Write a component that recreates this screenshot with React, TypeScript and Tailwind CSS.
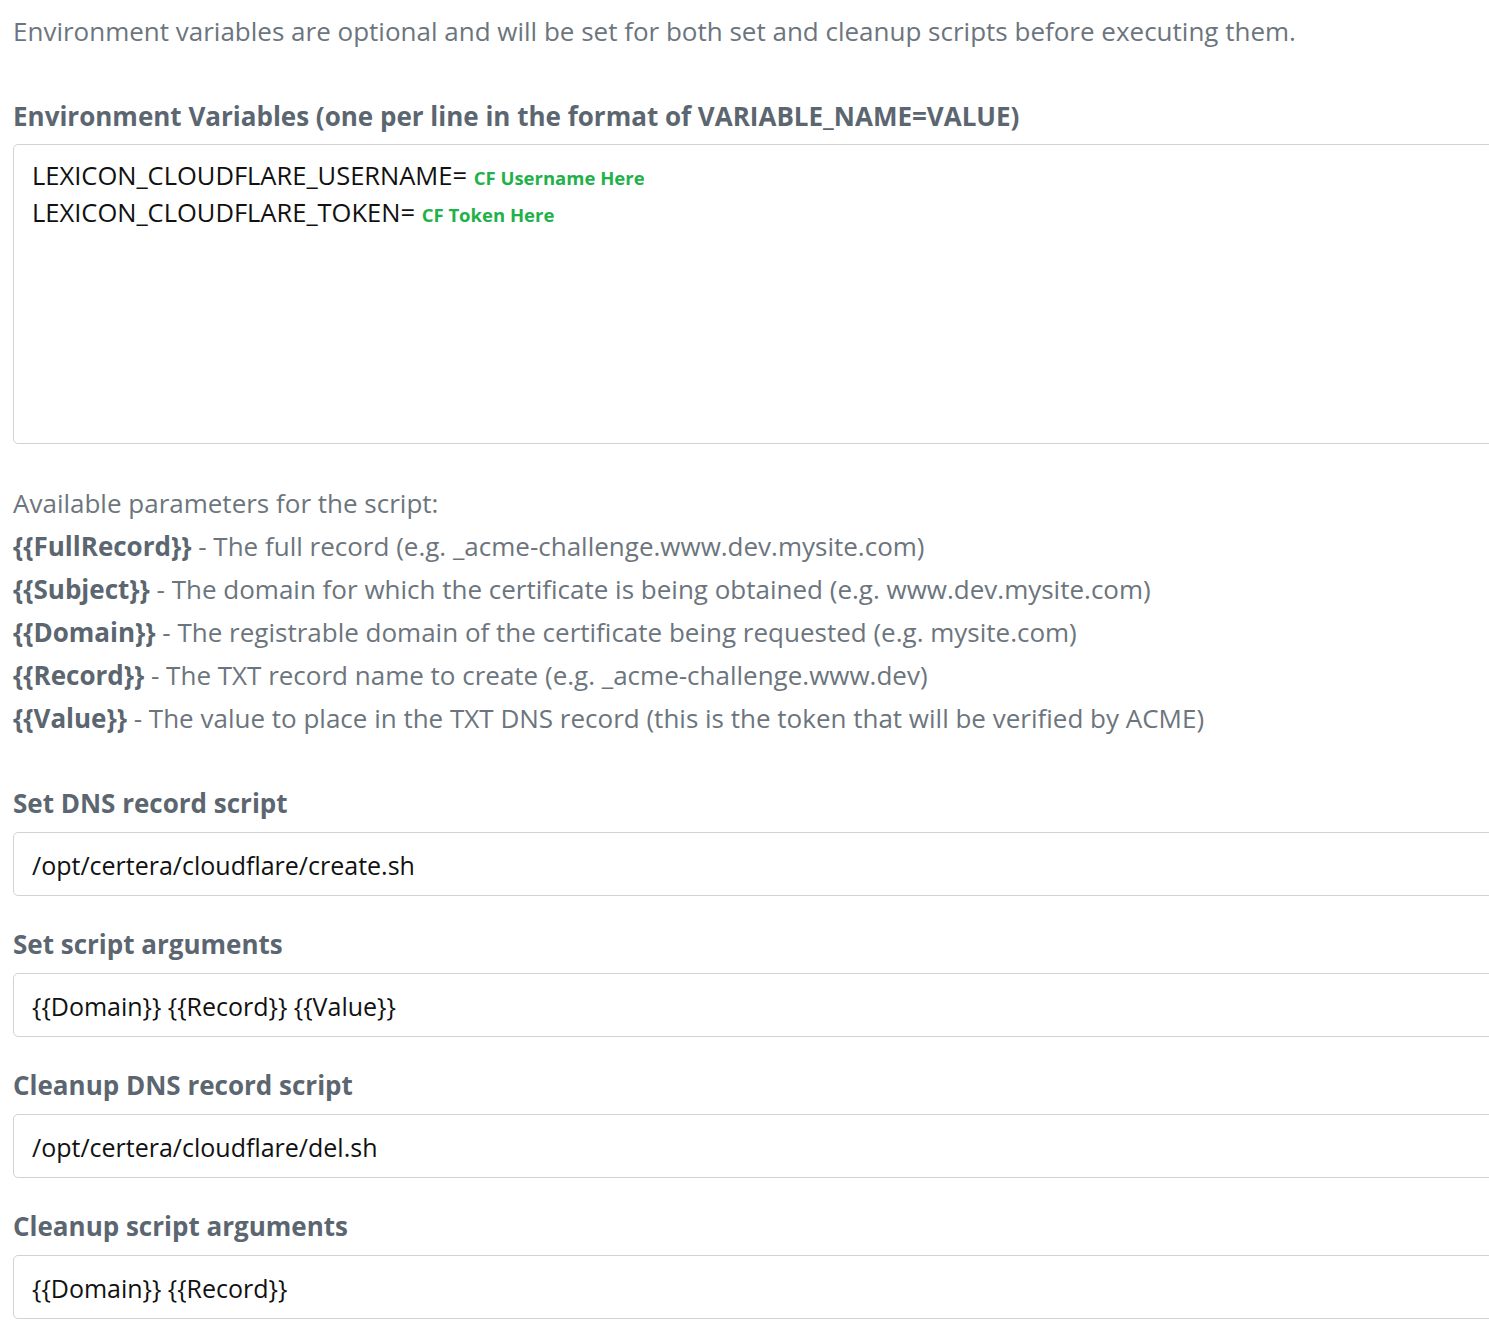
import React from 'react';

const params = [
    { name: 'FullRecord', desc: 'The full record (e.g. _acme-challenge.www.dev.mysite.com)' },
    { name: 'Subject', desc: 'The domain for which the certificate is being obtained (e.g. www.dev.mysite.com)' },
    { name: 'Domain', desc: 'The registrable domain of the certificate being requested (e.g. mysite.com)' },
    { name: 'Record', desc: 'The TXT record name to create (e.g. _acme-challenge.www.dev)' },
    { name: 'Value', desc: 'The value to place in the TXT DNS record (this is the token that will be verified by ACME)' },
];

const fields = [
    { label: 'Set DNS record script', value: '/opt/certera/cloudflare/create.sh' },
    { label: 'Set script arguments', value: '{{Domain}} {{Record}} {{Value}}' },
    { label: 'Cleanup DNS record script', value: '/opt/certera/cloudflare/del.sh' },
    { label: 'Cleanup script arguments', value: '{{Domain}} {{Record}}' },
];

export default function App() {
    return (
        <div className="w-full overflow-hidden bg-white" style={{ fontFamily: '"Open Sans", sans-serif' }}>
            <div className="w-[1520px] pl-[13px] pt-[10px] pb-[12px] text-[26px] text-[#6c757d]">

                {/* Env vars */}
                <p className="leading-[43px]">Environment variables are optional and will be set for both set and cleanup scripts before executing them.</p>

                <label className="block mt-[42px] font-bold text-[#5b6670] leading-[43px]">
                    Environment Variables (one per line in the format of VARIABLE_NAME=VALUE)
                </label>
                <div className="mt-[6px] h-[300px] rounded-[5px] border border-[#cfd3d6] px-[18px] py-[12px] text-[25.5px] leading-[37px] text-[#111]">
                    <div className="h-[37px]">LEXICON_CLOUDFLARE_USERNAME= <span className="text-[18.5px] leading-none font-bold text-[#1fb14a]">CF Username Here</span></div>
                    <div className="h-[37px]">LEXICON_CLOUDFLARE_TOKEN= <span className="text-[18.5px] leading-none font-bold text-[#1fb14a]">CF Token Here</span></div>
                </div>

                {/* Params */}
                <div className="mt-[38px] leading-[43px]">
                    <div>Available parameters for the script:</div>
                    {params.map(p => (
                        <div key={p.name}>
                            <b className="text-[#5b6670]">{`{{${p.name}}}`}</b> - {p.desc}
                        </div>
                    ))}
                </div>

                {/* Script fields */}
                <div className="mt-[42px]">
                    {fields.map(f => (
                        <div key={f.label} className="mb-[27px]">
                            <label className="block font-bold text-[#5b6670] leading-[43px]">{f.label}</label>
                            <div className="mt-[7px] h-[64px] flex items-center rounded-[5px] border border-[#cfd3d6] px-[18px] pt-[4px] text-[25px] text-[#111]">
                                {f.value}
                            </div>
                        </div>
                    ))}
                </div>

            </div>
        </div>
    );
}
